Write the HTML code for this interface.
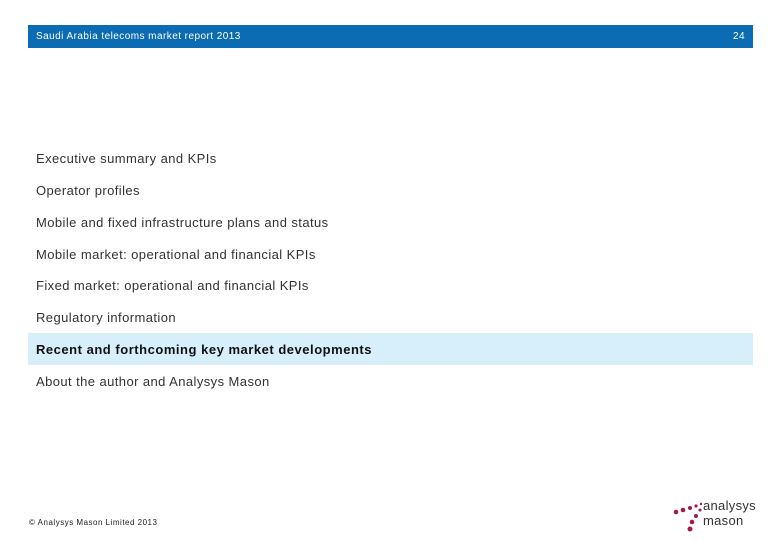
<!DOCTYPE html>
<html><head><style>
body{margin:0;width:780px;height:540px;background:#fff;position:relative;font-family:"Liberation Sans",sans-serif;overflow:hidden}
.hdr{position:absolute;left:28px;top:25px;width:725px;height:23px;background:#0b6bb3;color:#fff;font-size:10px;letter-spacing:0.45px}
.hdr .t{position:absolute;left:8px;top:6px}
.hdr .n{position:absolute;right:8px;top:6px}
.item{position:absolute;left:36px;font-size:13px;color:#333;letter-spacing:0.42px}
.hl{position:absolute;left:28px;top:333px;width:725px;height:32px;background:#d7eefb}
.foot{position:absolute;left:29px;top:518px;font-size:8px;color:#222;letter-spacing:0.5px}
.logo{position:absolute;left:703px;font-size:13px;color:#333;letter-spacing:0.3px}
</style></head><body>
<div class="hdr"><span class="t">Saudi Arabia telecoms market report 2013</span><span class="n">24</span></div>
<div class="item" style="top:151px">Executive summary and KPIs</div>
<div class="item" style="top:183px">Operator profiles</div>
<div class="item" style="top:215px">Mobile and fixed infrastructure plans and status</div>
<div class="item" style="top:247px">Mobile market: operational and financial KPIs</div>
<div class="item" style="top:278px">Fixed market: operational and financial KPIs</div>
<div class="item" style="top:310px">Regulatory information</div>
<div class="hl"></div>
<div class="item" style="top:342px;font-weight:bold;color:#111;letter-spacing:0.52px">Recent and forthcoming key market developments</div>
<div class="item" style="top:374px">About the author and Analysys Mason</div>
<div class="foot">© Analysys Mason Limited 2013</div>
<svg style="position:absolute;left:670px;top:498px" width="35" height="35">
<g fill="#a3184f">
<circle cx="6" cy="14" r="2.3"/><circle cx="13" cy="12" r="2.3"/><circle cx="20" cy="10" r="2"/><circle cx="26" cy="8" r="1.6"/>
<circle cx="31" cy="6" r="1.2"/><circle cx="30" cy="12" r="1.5"/><circle cx="26" cy="18" r="2"/><circle cx="22" cy="24" r="2.3"/><circle cx="20" cy="31" r="2.5"/>
</g></svg>
<div class="logo" style="top:498px">analysys</div>
<div class="logo" style="top:513px">mason</div>
</body></html>
